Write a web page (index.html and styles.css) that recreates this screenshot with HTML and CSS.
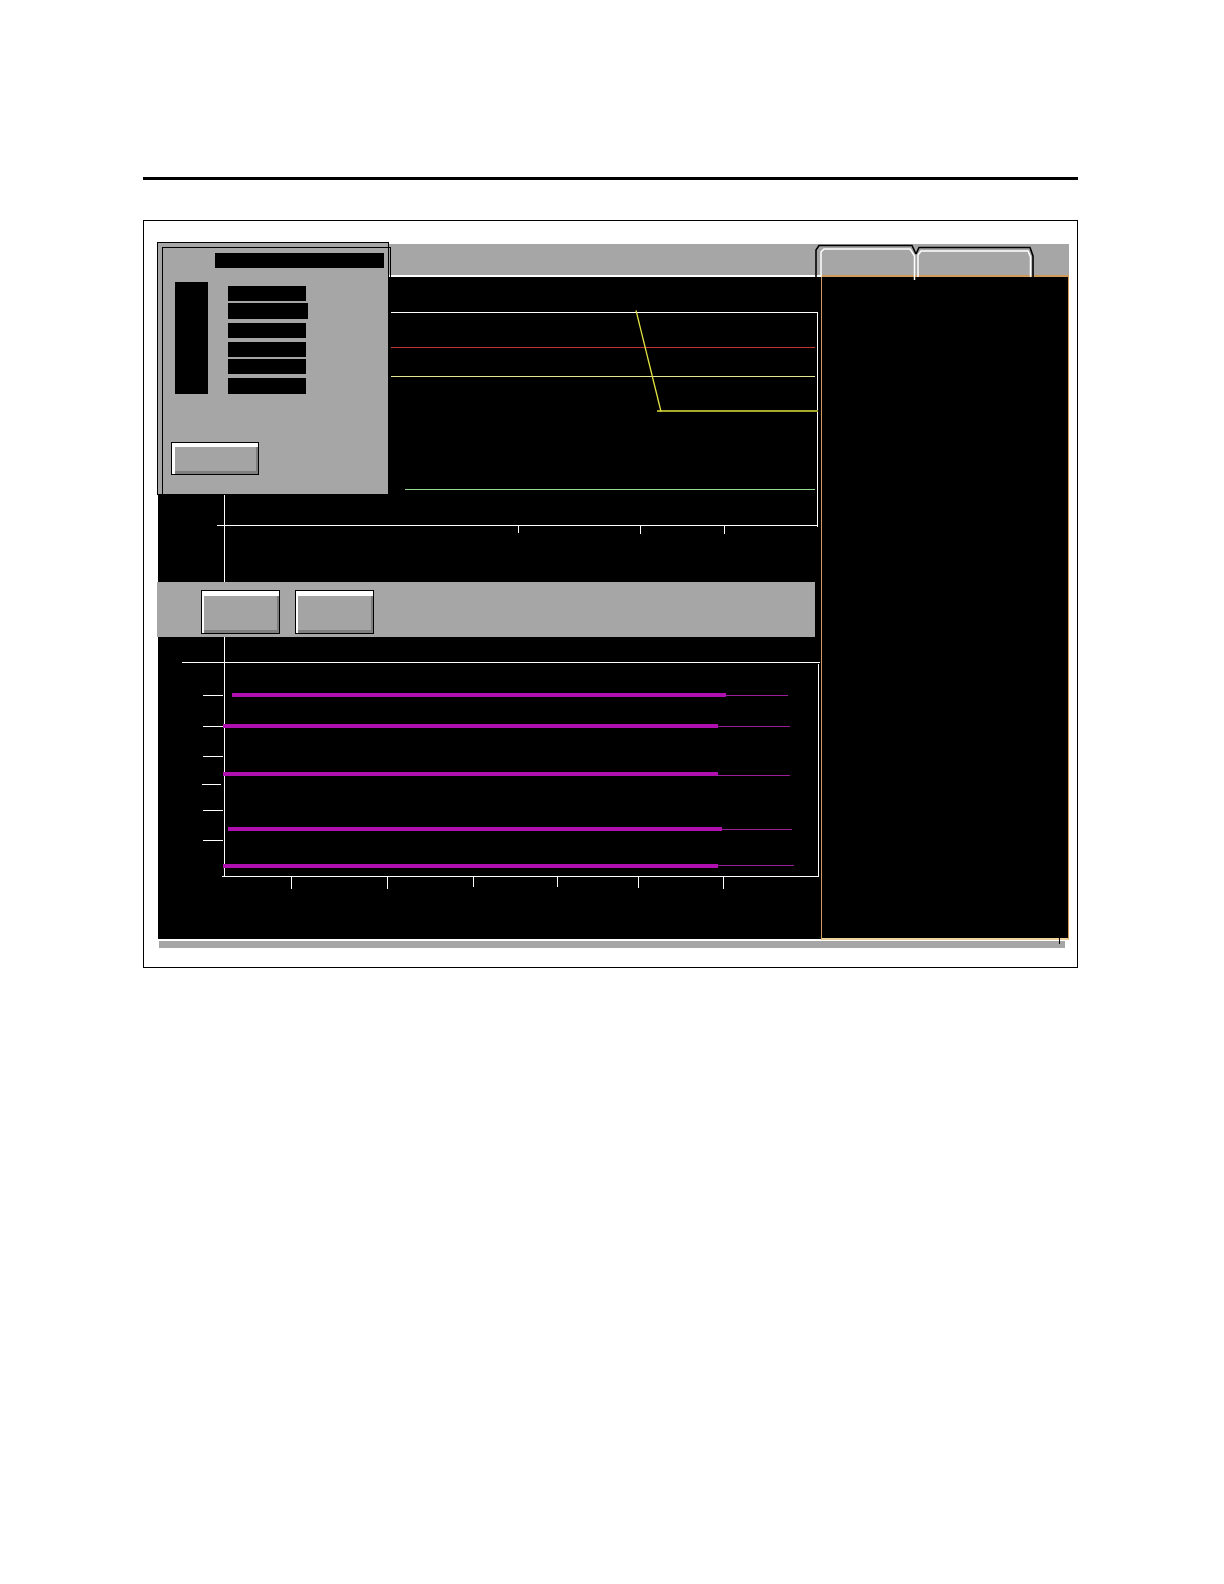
FILE: index.html
```html
<!DOCTYPE html>
<html>
<head>
<meta charset="utf-8">
<link rel="stylesheet" href="styles.css">
</head>
<body>
<div class="rule"></div>
<div class="frame">
  <div class="app">
    <div class="topbar">
      <svg class="tabs" width="222" height="40" viewBox="0 0 222 40">
        <path d="M1 33 L1 6 L4 1.5 L97 1.5 L101 10" fill="none" stroke="#000" stroke-width="1.6"/>
        <path d="M101 10 L104 3.5 L215 3.5 L218 12 L218 33" fill="none" stroke="#000" stroke-width="1.6"/>
        <path d="M6 33 L6 8 L9 5 L95 5 L99.5 12 L99.5 36" fill="none" stroke="#fff" stroke-width="1.5"/>
        <path d="M103 33 L103 11 L106 7 L213 7 L215.5 13 L215.5 33" fill="none" stroke="#fff" stroke-width="1.5"/>
      </svg>
    </div>
    <div class="body">
      <div class="main">
        <svg class="chart-upper" width="664" height="305" viewBox="0 0 664 305">
          <g shape-rendering="crispEdges">
            <line x1="0.5" y1="218" x2="0.5" y2="305" stroke="#fff" stroke-width="1"/>
            <line x1="233" y1="35.5" x2="660" y2="35.5" stroke="#fff" stroke-width="1"/>
            <line x1="660.5" y1="35" x2="660.5" y2="250" stroke="#fff" stroke-width="1"/>
            <line x1="233" y1="70.5" x2="658" y2="70.5" stroke="#c03434" stroke-width="1"/>
            <line x1="233" y1="99.5" x2="658" y2="99.5" stroke="#e6e690" stroke-width="1"/>
            <line x1="500" y1="134" x2="661" y2="134" stroke="#a8a82c" stroke-width="2"/>
            <line x1="248" y1="212.5" x2="658" y2="212.5" stroke="#94d894" stroke-width="1"/>
            <line x1="60" y1="248" x2="660" y2="248" stroke="#fff" stroke-width="1"/>
            <line x1="361.5" y1="248" x2="361.5" y2="256" stroke="#fff" stroke-width="1"/>
            <line x1="483.5" y1="248" x2="483.5" y2="257" stroke="#fff" stroke-width="1"/>
            <line x1="567.5" y1="248" x2="567.5" y2="257" stroke="#fff" stroke-width="1"/>
            <line x1="67.5" y1="218" x2="67.5" y2="305" stroke="#fff" stroke-width="1"/>
          </g>
          <line x1="479" y1="33.4" x2="504" y2="134.5" stroke="#e2e244" stroke-width="1.3"/>
        </svg>
        <div class="band">
          <div class="btn"></div>
          <div class="btn"></div>
        </div>
        <svg class="chart-lower" width="664" height="302" viewBox="0 0 664 302">
          <g shape-rendering="crispEdges">
            <line x1="0.5" y1="0" x2="0.5" y2="302" stroke="#fff" stroke-width="1"/>
            <line x1="67.5" y1="0" x2="67.5" y2="240" stroke="#fff" stroke-width="1"/>
            <line x1="25" y1="25.5" x2="663" y2="25.5" stroke="#fff" stroke-width="1"/>
            <line x1="661.5" y1="27" x2="661.5" y2="239" stroke="#fff" stroke-width="1"/>
            <line x1="65" y1="239.5" x2="662" y2="239.5" stroke="#fff" stroke-width="1"/>
            <g stroke="#fff" stroke-width="1">
              <line x1="46" y1="58.5" x2="66" y2="58.5"/>
              <line x1="46" y1="89.5" x2="66" y2="89.5"/>
              <line x1="46" y1="119.5" x2="66" y2="119.5"/>
              <line x1="45" y1="147.5" x2="64" y2="147.5"/>
              <line x1="46" y1="173.5" x2="66" y2="173.5"/>
              <line x1="46" y1="203.5" x2="66" y2="203.5"/>
            </g>
            <g stroke="#fff" stroke-width="1">
              <line x1="134.5" y1="240" x2="134.5" y2="252"/>
              <line x1="230.5" y1="240" x2="230.5" y2="252"/>
              <line x1="316.5" y1="240" x2="316.5" y2="250"/>
              <line x1="400.5" y1="240" x2="400.5" y2="250"/>
              <line x1="481.5" y1="240" x2="481.5" y2="251"/>
              <line x1="566.5" y1="240" x2="566.5" y2="252"/>
            </g>
            <g>
              <line x1="74.5" y1="58" x2="569" y2="58" stroke="#b010b0" stroke-width="4"/>
              <line x1="569" y1="58.5" x2="630.6" y2="58.5" stroke="#9a1e9a" stroke-width="1"/>
              <line x1="66.4" y1="89" x2="561" y2="89" stroke="#b010b0" stroke-width="4"/>
              <line x1="561" y1="89.5" x2="632.6" y2="89.5" stroke="#9a1e9a" stroke-width="1"/>
              <line x1="66.4" y1="137" x2="561" y2="137" stroke="#b010b0" stroke-width="4"/>
              <line x1="561" y1="138.5" x2="632.6" y2="138.5" stroke="#9a1e9a" stroke-width="1"/>
              <line x1="70.5" y1="192" x2="565" y2="192" stroke="#b010b0" stroke-width="4"/>
              <line x1="565" y1="192.5" x2="634.6" y2="192.5" stroke="#9a1e9a" stroke-width="1"/>
              <line x1="66.4" y1="229" x2="561" y2="229" stroke="#b010b0" stroke-width="4"/>
              <line x1="561" y1="228.5" x2="636.6" y2="228.5" stroke="#9a1e9a" stroke-width="1"/>
            </g>
          </g>
        </svg>
      </div>
      <div class="side"></div>
    </div>
    <div class="bottombar"></div>
    <div class="dialog">
      <div class="dialog-inner"></div>
      <div class="title-field"></div>
      <div class="dialog-row">
        <div class="tall-box"></div>
        <div class="fields">
          <div class="field"></div>
          <div class="field wide"></div>
          <div class="field"></div>
          <div class="field"></div>
          <div class="field"></div>
          <div class="field"></div>
        </div>
      </div>
      <div class="btn dialog-btn"></div>
    </div>
  </div>
</div>
</body>
</html>
```
FILE: styles.css
```css
html, body {
  margin: 0;
  padding: 0;
  background: #fff;
  font-family: "Liberation Sans", Arial, sans-serif;
}
.rule {
  margin: 177px 0 0 143px;
  width: 935px;
  height: 3px;
  background: #000;
}
.frame {
  margin: 40px 0 0 143px;
  width: 935px;
  height: 748px;
  box-sizing: border-box;
  border: 1px solid #000;
  padding: 23px 0 0 13px;
}
.app {
  position: relative;
  width: 912px;
}
.topbar {
  height: 31px;
  background: #a6a6a6;
  position: relative;
  z-index: 2;
  display: flex;
  padding-left: 658px;
}
.tabs {
  display: block;
  flex: none;
}
.body {
  display: flex;
  height: 665px;
}
.main {
  width: 664px;
  background: #000;
  display: flex;
  flex-direction: column;
  border-top: 2px solid #fff;
  border-bottom: 1px solid #fff;
}
.main svg {
  display: block;
  flex: none;
}
.band {
  flex: none;
  height: 55px;
  width: 658px;
  background: #a6a6a6;
  display: flex;
  gap: 15px;
  padding: 8px 0 0 44px;
  box-sizing: border-box;
}
.btn {
  width: 79px;
  height: 44px;
  box-sizing: border-box;
  border: 1px solid #000;
  background: #a4a4a4;
  box-shadow: inset 2px 5px 0 #fff, inset -2px -3px 0 #7e7e7e;
}
.side {
  width: 248px;
  background: #000;
  box-sizing: border-box;
  border: 1px solid #d49a5c;
  border-top: 2px solid #cf9a5a;
  border-bottom: 2px solid #f0d49a;
}
.bottombar {
  margin: 1px 0 0 2px;
  width: 906px;
  height: 7px;
  background: #a6a6a6;
  position: relative;
}
.bottombar::after {
  content: "";
  position: absolute;
  right: 5px;
  top: -3px;
  width: 1px;
  height: 6px;
  background: #000;
}
.dialog {
  position: absolute;
  left: 0;
  top: -2px;
  width: 232px;
  height: 253px;
  box-sizing: border-box;
  border: 1px solid #000;
  background: #a6a6a6;
  padding-top: 10px;
  z-index: 3;
}
.dialog-inner {
  position: absolute;
  left: 4px;
  top: 4px;
  right: -3px;
  bottom: -1px;
  border: 1px solid #000;
  pointer-events: none;
}
.title-field {
  margin-left: 57px;
  width: 169px;
  height: 15px;
  background: #000;
}
.dialog-row {
  display: flex;
  margin-top: 14px;
  margin-left: 17px;
}
.tall-box {
  width: 33px;
  height: 112px;
  background: #000;
}
.fields {
  display: flex;
  flex-direction: column;
  margin-left: 20px;
  margin-top: 4px;
}
.field {
  width: 78px;
  height: 15px;
  background: #000;
}
.field.wide {
  width: 80px;
  height: 16px;
  margin-top: 2px;
}
.field:nth-child(3) { margin-top: 4px; }
.field:nth-child(4) { margin-top: 4px; }
.field:nth-child(5) { margin-top: 2px; }
.field:nth-child(6) { margin-top: 4px; height: 16px; }
.dialog-btn {
  margin-top: 48px;
  margin-left: 13px;
  width: 88px;
  height: 33px;
  box-shadow: inset 3px 4px 0 #fff, inset -2px -3px 0 #7e7e7e;
}
```
